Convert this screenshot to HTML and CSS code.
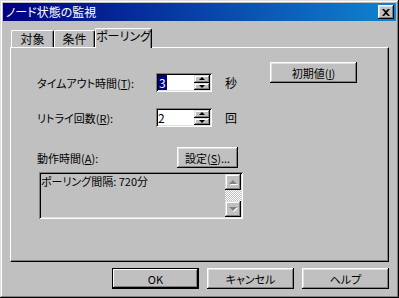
FILE: index.html
```html
<!DOCTYPE html>
<html lang="ja">
<head>
  <meta charset="UTF-8" />
  <title>ノード状態の監視</title>
  <link rel="stylesheet" href="styles.css">
</head>
<body>
  <div class="window">
    <div class="titlebar">
      <span class="title">ノード状態の監視</span>
      <button class="close-btn">
        <svg width="8" height="7" viewBox="0 0 8 7"><path d="M0 0h2l2 2 2-2h2L5 3.5 8 7H6L4 5 2 7H0l3-3.5z" fill="#000"/></svg>
      </button>
    </div>

    <div class="tabs">
      <div class="tab tab-first">対象</div>
      <div class="tab tab-second">条件</div>
      <div class="tab active">ポーリング</div>
    </div>

    <div class="panel">
      <div class="top">
        <div class="fields">
          <div class="field">
            <span class="label">タイムアウト時間(<u>T</u>):</span>
            <div class="spin">
              <span class="value"><span class="selected">3</span></span>
              <div class="spin-btns">
                <span class="spin-btn"><i class="arrow-up"></i></span>
                <span class="spin-btn"><i class="arrow-down"></i></span>
              </div>
            </div>
            <span class="unit">秒</span>
          </div>
          <div class="field">
            <span class="label">リトライ回数(<u>R</u>):</span>
            <div class="spin">
              <span class="value">2</span>
              <div class="spin-btns">
                <span class="spin-btn"><i class="arrow-up"></i></span>
                <span class="spin-btn"><i class="arrow-down"></i></span>
              </div>
            </div>
            <span class="unit">回</span>
          </div>
        </div>
        <button class="btn btn-init">初期値(<u>I</u>)</button>
      </div>

      <div class="field schedule">
        <span class="label label-wide">動作時間(<u>A</u>):</span>
        <button class="btn btn-set">設定(<u>S</u>)...</button>
      </div>

      <div class="listbox">
        <div class="list-text">ポーリング間隔: 720分</div>
        <div class="scrollbar">
          <span class="scroll-btn"><i class="arrow-up dim"></i></span>
          <span class="track"></span>
          <span class="scroll-btn"><i class="arrow-down dim"></i></span>
        </div>
      </div>
    </div>

    <div class="actions">
      <button class="btn default">OK</button>
      <button class="btn">キャンセル</button>
      <button class="btn">ヘルプ</button>
    </div>
  </div>
</body>
</html>
```

FILE: styles.css
```css
html, body {
  margin: 0;
  padding: 0;
  background: #c0c0c0;
  font-family: "Noto Sans CJK JP", "DejaVu Sans", sans-serif;
  font-size: 11px;
  font-feature-settings: "palt";
  white-space: nowrap;
  color: #000;
}

.window {
  width: 399px;
  height: 298px;
  box-sizing: border-box;
  padding: 3px;
  background: #c0c0c0;
  box-shadow:
    inset -1px -1px #000,
    inset 1px 1px #dfdfdf,
    inset -2px -2px #808080,
    inset 2px 2px #fff;
}

.titlebar {
  height: 18px;
  display: flex;
  align-items: center;
  padding: 0 2px 0 2px;
  background: linear-gradient(to right, #000080, #1084d0);
}

.title {
  color: #fff;
  font-size: 12px;
  line-height: 18px;
  padding-left: 1px;
}

.close-btn {
  margin-left: auto;
  width: 16px;
  height: 14px;
  padding: 0;
  border: none;
  background: #c0c0c0;
  display: flex;
  align-items: center;
  justify-content: center;
  box-shadow:
    inset -1px -1px #000,
    inset 1px 1px #fff,
    inset -2px -2px #808080,
    inset 2px 2px #dfdfdf;
}

/* tabs */
.tabs {
  display: flex;
  align-items: flex-end;
  margin: 7px 0 0 8px;
}

.tab {
  height: 17px;
  box-sizing: border-box;
  border-top: 1px solid #fff;
  border-left: 1px solid #fff;
  border-right: 1px solid #000;
  border-radius: 2px 2px 0 0;
  box-shadow: inset -1px 0 #808080;
  text-align: center;
  font-size: 12px;
  line-height: 16px;
}

.tab-first {
  width: 43px;
}

.tab-second {
  width: 41px;
}

.tab.active {
  position: relative;
  z-index: 1;
  width: 57px;
  height: 20px;
  margin-bottom: -1px;
  background: #c0c0c0;
  line-height: 14px;
}

/* panel */
.panel {
  margin: 0 7px;
  height: 215px;
  box-sizing: border-box;
  border-top: 1px solid #fff;
  border-left: 1px solid #fff;
  border-right: 1px solid #000;
  border-bottom: 1px solid #000;
  box-shadow: inset -1px -1px #808080;
}

.top {
  display: flex;
  align-items: flex-start;
  padding-top: 14px;
}

.fields {
  margin-top: 11px;
  display: flex;
  flex-direction: column;
  gap: 16px;
}

.field {
  display: flex;
  align-items: center;
  padding-left: 26px;
}

.label {
  width: 119px;
}

.label-wide {
  width: 140px;
}

.unit {
  margin-left: 13px;
  font-size: 12px;
}

.spin {
  width: 56px;
  height: 19px;
  box-sizing: border-box;
  padding: 2px;
  display: flex;
  background: #fff;
  font-size: 12px;
  box-shadow:
    inset 1px 1px #808080,
    inset -1px -1px #fff,
    inset 2px 2px #000,
    inset -2px -2px #dfdfdf;
}

.value {
  flex: 1;
  line-height: 15px;
}

.selected {
  display: inline-block;
  background: #000080;
  color: #fff;
  height: 15px;
  padding: 0 1px;
}

.spin-btns {
  width: 16px;
  display: flex;
  flex-direction: column;
}

.spin-btn,
.scroll-btn {
  flex: 1;
  display: flex;
  align-items: center;
  justify-content: center;
  background: #c0c0c0;
  box-shadow:
    inset -1px -1px #000,
    inset 1px 1px #dfdfdf,
    inset -2px -2px #808080,
    inset 2px 2px #fff;
}

.arrow-up,
.arrow-down {
  width: 0;
  height: 0;
  border-left: 3px solid transparent;
  border-right: 3px solid transparent;
}

.arrow-up {
  border-bottom: 3px solid #000;
}

.arrow-down {
  border-top: 3px solid #000;
}

.arrow-up.dim {
  border-left-width: 4px;
  border-right-width: 4px;
  border-bottom: 4px solid #808080;
  filter: drop-shadow(1px 1px 0 #fff);
}

.arrow-down.dim {
  border-left-width: 4px;
  border-right-width: 4px;
  border-top: 4px solid #808080;
  filter: drop-shadow(1px 1px 0 #fff);
}

/* buttons */
.btn {
  height: 21px;
  padding: 0;
  border: none;
  background: #c0c0c0;
  font: inherit;
  color: #000;
  box-shadow:
    inset -1px -1px #000,
    inset 1px 1px #fff,
    inset -2px -2px #808080,
    inset 2px 2px #dfdfdf;
}

.btn-init {
  width: 87px;
  margin-left: auto;
  margin-right: 31px;
}

.schedule {
  margin-top: 20px;
}

.btn-set {
  width: 61px;
}

.listbox {
  margin: 4px 0 0 28px;
  width: 204px;
  height: 47px;
  box-sizing: border-box;
  padding: 2px;
  display: flex;
  background: #c0c0c0;
  box-shadow:
    inset 1px 1px #808080,
    inset -1px -1px #fff,
    inset 2px 2px #000,
    inset -2px -2px #dfdfdf;
}

.list-text {
  flex: 1;
  line-height: 14px;
}

.scrollbar {
  width: 16px;
  display: flex;
  flex-direction: column;
}

.scroll-btn {
  flex: 0 0 16px;
}

.track {
  flex: 1;
  background-color: #c0c0c0;
  background-image: conic-gradient(#fff 25%, #c0c0c0 0 50%, #fff 0 75%, #c0c0c0 0);
  background-size: 2px 2px;
}

/* dialog buttons */
.actions {
  display: flex;
  justify-content: flex-end;
  gap: 8px;
  margin-top: 6px;
  padding-right: 7px;
}

.actions .btn {
  width: 87px;
}

.btn.default {
  box-shadow:
    inset 0 0 0 1px #000,
    inset -2px -2px #000,
    inset 2px 2px #fff,
    inset -3px -3px #808080;
}
```
